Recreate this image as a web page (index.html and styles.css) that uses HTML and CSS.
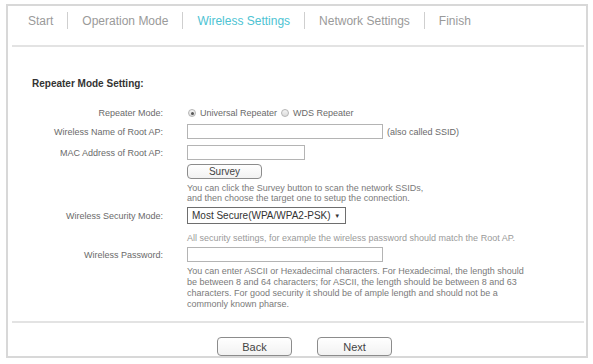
FILE: index.html
```html
<!DOCTYPE html>
<html lang="en">
<head>
    <meta charset="UTF-8">
    <title>Quick Setup - Wireless Settings</title>
    <link rel="stylesheet" href="styles.css">
</head>
<body>
    <div class="wizard">
        <div class="steps">
            <span class="step">Start</span>
            <span class="sep"></span>
            <span class="step">Operation Mode</span>
            <span class="sep"></span>
            <span class="step active">Wireless Settings</span>
            <span class="sep"></span>
            <span class="step">Network Settings</span>
            <span class="sep"></span>
            <span class="step">Finish</span>
        </div>

        <div class="form">
            <h2 class="title">Repeater Mode Setting:</h2>

            <div class="row row-mode">
                <label class="label">Repeater Mode:</label>
                <div class="field">
                    <span class="radio checked"></span>
                    <span class="radio-text">Universal Repeater</span>
                    <span class="radio"></span>
                    <span class="radio-text">WDS Repeater</span>
                </div>
            </div>

            <div class="row row-ssid">
                <label class="label">Wireless Name of Root AP:</label>
                <div class="field">
                    <input class="text-input wide" type="text">
                    <span class="note">(also called SSID)</span>
                </div>
            </div>

            <div class="row row-mac">
                <label class="label">MAC Address of Root AP:</label>
                <div class="field">
                    <input class="text-input short" type="text">
                </div>
            </div>

            <div class="row row-survey">
                <span class="label"></span>
                <div class="field">
                    <button class="btn survey">Survey</button>
                </div>
            </div>

            <div class="row row-help1">
                <span class="label"></span>
                <p class="help">You can click the Survey button to scan the network SSIDs,<br>and then choose the target one to setup the connection.</p>
            </div>

            <div class="row row-security">
                <label class="label">Wireless Security Mode:</label>
                <div class="field">
                    <div class="select">Most Secure(WPA/WPA2-PSK) <span class="caret">&#9660;</span></div>
                </div>
            </div>

            <div class="row row-help2">
                <span class="label"></span>
                <p class="help light">All security settings, for example the wireless password should match the Root AP.</p>
            </div>

            <div class="row row-password">
                <label class="label">Wireless Password:</label>
                <div class="field">
                    <input class="text-input wide" type="text">
                </div>
            </div>

            <div class="row row-help3">
                <span class="label"></span>
                <p class="help long">You can enter ASCII or Hexadecimal characters. For Hexadecimal, the length should be between 8 and 64 characters; for ASCII, the length should be between 8 and 63 characters. For good security it should be of ample length and should not be a commonly known pharse.</p>
            </div>
        </div>

        <div class="footer">
            <button class="btn nav-btn">Back</button>
            <button class="btn nav-btn">Next</button>
        </div>
    </div>
</body>
</html>
```

FILE: styles.css
```css
* {
    margin: 0;
    padding: 0;
    box-sizing: border-box;
    font-family: "Liberation Sans", Arial, sans-serif;
}

body {
    background: #ffffff;
}

.wizard {
    margin: 4px 0 0 6px;
    width: 582px;
    height: 354px;
    border: 2px solid #d8d8d8;
    display: flex;
    flex-direction: column;
}

/* step bar */
.steps {
    margin: 0 2px 0 4px;
    height: 41px;
    padding: 6px 0 0 16px;
    display: flex;
    align-items: center;
    gap: 14px;
    border-bottom: 2px solid #e3e3e3;
}

.step {
    font-size: 12px;
    color: #9a9a9a;
    align-self: flex-start;
    margin-top: 2px;
}

.step.active {
    color: #4dc3d3;
}

.sep {
    width: 1px;
    height: 17px;
    background: #cfcfcf;
    align-self: flex-start;
    margin-top: 0;
}

/* form */
.form {
    padding-left: 24px;
}

.title {
    margin-top: 31px;
    font-size: 10px;
    line-height: 12px;
    font-weight: bold;
    color: #333;
}

.row {
    display: flex;
    align-items: center;
}

.label {
    width: 131px;
    margin-right: 24px;
    flex-shrink: 0;
    text-align: right;
    font-size: 9px;
    color: #6a6a6a;
}

.field {
    display: flex;
    align-items: center;
    font-size: 9px;
    color: #666;
}

.row-mode { margin-top: 16px; height: 14px; }
.row-ssid { margin-top: 4px; }
.row-mac { margin-top: 6px; }
.row-survey { margin-top: 4px; }
.row-help1 { margin-top: 4px; align-items: flex-start; }
.row-security { margin-top: 4px; }
.row-help2 { margin-top: 9px; }
.row-password { margin-top: 4px; }
.row-help3 { margin-top: 4px; align-items: flex-start; }

.radio {
    width: 8px;
    height: 8px;
    border-radius: 50%;
    border: 1px solid #b5b5b5;
    background: linear-gradient(#f4f4f4, #dcdcdc);
    margin: 0 4px 0 1px;
    position: relative;
}

.radio.checked::after {
    content: '';
    position: absolute;
    left: 1.5px;
    top: 1.5px;
    width: 3px;
    height: 3px;
    border-radius: 50%;
    background: #555;
}

.radio-text {
    margin-right: 3px;
    color: #6a6a6a;
}

.text-input {
    height: 15px;
    border: 1px solid #b4b4b4;
    background: #fff;
    outline: none;
}

.text-input.wide { width: 196px; }
.text-input.short { width: 118px; }

.note {
    margin-left: 4px;
    color: #6a6a6a;
}

.btn {
    background: linear-gradient(#ffffff, #f2f2f2);
    border: 1px solid #8c8c8c;
    border-radius: 4px;
    color: #444;
    cursor: pointer;
}

.survey {
    width: 75px;
    height: 15px;
    font-size: 10px;
    line-height: 13px;
}

.help {
    font-size: 9px;
    line-height: 10px;
    color: #7a7a7a;
}

.help.light {
    color: #9a9a9a;
}

.help.long {
    width: 345px;
    line-height: 11px;
}

.select {
    width: 159px;
    height: 17px;
    border: 1px solid #6e6e6e;
    padding-left: 4px;
    font-size: 10px;
    line-height: 15px;
    color: #333;
    background: #fff;
}

.caret {
    font-size: 6px;
    vertical-align: 1px;
    margin-left: 1px;
}

/* bottom buttons */
.footer {
    margin: auto 2px 0 4px;
    height: 35px;
    border-top: 2px solid #e3e3e3;
    padding: 14px 0 0 205px;
    display: flex;
    gap: 25px;
}

.nav-btn {
    width: 75px;
    height: 19px;
    font-size: 11px;
}
```
